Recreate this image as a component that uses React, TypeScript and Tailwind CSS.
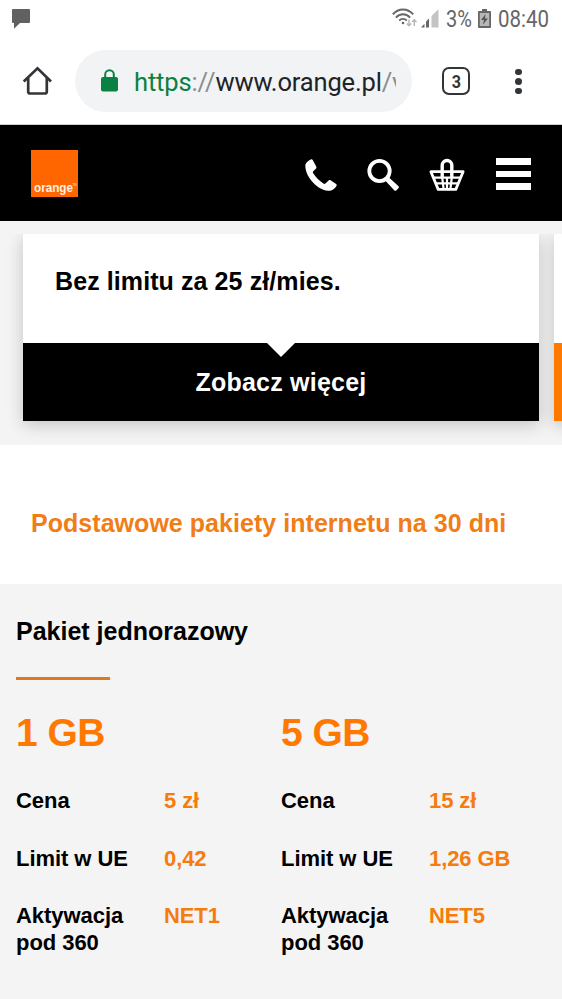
import React from 'react';

interface PackageOffer {
  size: string;
  rows: { label: string; value: string }[];
}

const offers: PackageOffer[] = [
  {
    size: '1 GB',
    rows: [
      { label: 'Cena', value: '5 zł' },
      { label: 'Limit w UE', value: '0,42' },
      { label: 'Aktywacja pod 360', value: 'NET1' },
    ],
  },
  {
    size: '5 GB',
    rows: [
      { label: 'Cena', value: '15 zł' },
      { label: 'Limit w UE', value: '1,26 GB' },
      { label: 'Aktywacja pod 360', value: 'NET5' },
    ],
  },
];

const StatusBar = () => (
  <div className="h-[38px] flex items-start justify-between pl-3 pr-[13px] text-[#666] font-[Roboto,sans-serif]">
    <svg className="mt-[9px]" width="18" height="20" viewBox="0 0 18 20" fill="#616161">
      <path d="M1 0h16a1 1 0 0 1 1 1v12a1 1 0 0 1-1 1H8l-6 5.800V14H1a1 1 0 0 1-1-1V1a1 1 0 0 1 1-1z" />
    </svg>
    <div className="flex items-start">
      <svg className="mt-2" width="25" height="20" viewBox="0 0 25 20" fill="none" stroke="#666" strokeWidth="1.900">
        <path d="M.8 6.300C6.500-.2 15.500-.2 21.200 6.300M3.900 9.600c4-4.500 10.200-4.500 14.200 0M7.200 12.700c2.200-2.400 5.400-2.400 7.600 0" />
        <circle cx="11" cy="15" r="1.300" fill="#666" stroke="none" />
        <path d="M17 11.500v6M14.800 15.500l2.200 2.300 2.200-2.300M22.300 18v-6M20.100 14l2.200-2.300 2.200 2.300" stroke="#b5b5b5" strokeWidth="1.400" />
      </svg>
      <svg className="mt-[9px] ml-[3px]" width="20" height="19" viewBox="0 0 20 19">
        <path d="M1 18.500h3.500v-3.800z" fill="#666" />
        <path d="M6 18.500v-6l3-3v9z" fill="#666" />
        <path d="M11.500 18.500V7L18.500.300v18.200z" fill="#c4c4c4" />
      </svg>
      <span className="ml-[6px] mt-[5px] w-[27px] text-[23px] leading-[30px] inline-block origin-left scale-x-[0.87]">3%</span>
      <svg className="mt-[9px] ml-[5px]" width="13" height="19" viewBox="0 0 13 19">
        <path d="M4 0h5v2h3a1 1 0 0 1 1 1v15a1 1 0 0 1-1 1H1a1 1 0 0 1-1-1V3a1 1 0 0 1 1-1h3z" fill="#666" />
        <path d="M1.800 4h9.400v13H1.800z" fill="#b8b8b8" />
        <path d="M7.500 5L3 11h3l-1.200 4.800L10 9.500H7z" fill="#555" />
      </svg>
      <span className="ml-[7px] mt-[5px] w-[51px] text-[23px] leading-[30px] inline-block origin-left scale-x-[0.89]">08:40</span>
    </div>
  </div>
);

const BrowserBar = () => (
  <div className="h-[87px] flex items-start border-b border-[#d0d0d0] font-[Roboto,sans-serif]">
    <svg className="mt-[28px] ml-[22px]" width="30" height="30" viewBox="0 0 30 30" fill="none" stroke="#333639" strokeWidth="2.700" strokeLinejoin="round">
      <path d="M1.700 15.500L15.500 2.300 29 15.500" strokeLinejoin="miter" />
      <path d="M6.200 12v13.500a2 2 0 0 0 2 2h14.600a2 2 0 0 0 2-2V12" />
    </svg>
    <div className="mt-3 ml-[23px] w-[337px] h-[62px] rounded-full bg-[#f1f3f4] flex items-center">
      <svg className="ml-[26px] -mt-[1px] shrink-0" width="17" height="23" viewBox="0 0 17 23">
        <rect x="0" y="8" width="17" height="14.500" rx="2" fill="#0b8043" />
        <path d="M4.200 9V5.600a4.300 4.300 0 0 1 8.600 0V9" fill="none" stroke="#0b8043" strokeWidth="2" />
      </svg>
      <div className="ml-4 mt-px w-[262px] overflow-hidden whitespace-nowrap text-[25.500px] leading-[34px] tracking-[-0.160px] text-[#212427]">
        <span className="text-[#0b8043]">https</span>
        <span className="text-[#888c90]">://</span>
        www.orange.pl
        <span className="text-[#888c90]">/v</span>
      </div>
    </div>
    <div className="mt-[29px] ml-[30px] w-7 h-7 rounded-[7px] border-[2.500px] border-[#333639] flex items-center justify-center text-[19px] leading-none font-bold text-[#333639]">
      <span className="scale-x-[0.85]">3</span>
    </div>
    <div className="mt-[30.500px] ml-[45px] flex flex-col gap-[3px]">
      <span className="w-[6.500px] h-[6.500px] rounded-full bg-[#333639]" />
      <span className="w-[6.500px] h-[6.500px] rounded-full bg-[#333639]" />
      <span className="w-[6.500px] h-[6.500px] rounded-full bg-[#333639]" />
    </div>
  </div>
);

const SiteHeader = () => (
  <header className="h-24 bg-black flex items-start">
    <div className="mt-[25px] ml-[31px] w-[47px] h-[47px] bg-[#ff6600] text-[#fff0e0] flex items-end pl-[2.500px] pb-[2px]">
      <span className="w-[39px] text-[13px] leading-[14px] font-bold inline-block origin-left scale-x-[0.9]">orange</span>
      <span className="text-[3px] leading-[20px]">TM</span>
    </div>
    <svg className="mt-[33px] ml-[226px]" width="34" height="34" viewBox="0 0 34 34" fill="#fff">
      <path d="M7.300 1.300c-1.900.6-5 3-5.900 5.300C.7 14 5.500 21.700 11.500 27c5 4.200 11 6.700 15.500 5.600 2.300-.8 4.900-3.100 5.700-5.100.2-.6-.1-1-.6-1.400l-5.500-3.800c-.6-.4-1.200-.4-1.700 0l-3.500 3.200c-.6.5-1.300.5-2 0C15.300 22.800 12 19.500 9.200 15.300c-.5-.8-.5-1.400.1-2l2.800-2.900c.5-.6.5-1.200.1-1.800L8.700 1.900c-.4-.6-.8-.8-1.400-.6z" />
    </svg>
    <svg className="mt-[33px] ml-[29px]" width="34" height="34" viewBox="0 0 34 34" fill="#fff">
      <circle cx="12.500" cy="13" r="10.200" fill="none" stroke="#fff" strokeWidth="3.800" />
      <path d="M21.500 17.500l1 2.600 8.800 7.900c.8.800.8 1.500.1 2.300l-1.900 1.900c-.8.800-1.500.8-2.300 0l-8.100-8.600-2-1.500z" />
    </svg>
    <svg className="mt-[33px] ml-[28px]" width="36" height="34" viewBox="0 0 36 34" fill="none" stroke="#fff" strokeWidth="2.800" strokeLinejoin="round">
      <path d="M1.900 13.700h32.200l-7.300 17.700H9.200z" />
      <path d="M13.200 19V7.300a4.800 4.800 0 0 1 9.600 0V19" strokeWidth="3.400" />
      <path d="M5 19.700h26M7 25.300h22M13 18l1.600 13M23 18l-1.600 13M18 19v12" strokeWidth="2.200" />
    </svg>
    <div className="mt-[33px] ml-[31px] flex flex-col gap-[6px]">
      <span className="w-[35px] h-[6.500px] bg-white" />
      <span className="w-[35px] h-[6.500px] bg-white" />
      <span className="w-[35px] h-[6.500px] bg-white" />
    </div>
  </header>
);

const OfferCarousel = () => (
  <section className="h-56 bg-[#f4f4f4] pt-[13px]">
    <div className="h-[211px] flex gap-[15px] pl-[23px] overflow-hidden">
      <div className="w-[516px] h-[187px] shrink-0 flex flex-col bg-white shadow-[0_4px_16px_rgba(0,0,0,0.2)]">
        <div className="h-[109px] pl-[32px] pt-[31px] text-[25px] leading-8 font-bold tracking-[0.090px]">Bez limitu za 25 zł/mies.</div>
        <div className="relative flex-1 bg-black text-white flex items-center justify-center">
          <svg className="absolute top-0 left-1/2 -translate-x-1/2" width="28" height="14" viewBox="0 0 28 14" fill="#fff">
            <path d="M0 0h28L14 14z" />
          </svg>
          <span className="text-[25px] leading-8 font-bold tracking-[0.230px]">Zobacz więcej</span>
        </div>
      </div>
      <div className="w-[516px] h-[187px] shrink-0 flex flex-col bg-white shadow-[0_4px_16px_rgba(0,0,0,0.2)]">
        <div className="h-[109px]" />
        <div className="flex-1 bg-[#ff7900]" />
      </div>
    </div>
  </section>
);

const OfferColumn: React.FC<{ offer: PackageOffer }> = ({ offer }) => (
  <div>
    <h3 className="text-[39px] leading-[48px] font-bold tracking-[-0.500px] text-[#ff7900]">{offer.size}</h3>
    <dl className="mt-[30.500px] flex flex-col gap-[30.700px]">
      {offer.rows.map(row => (
        <div key={row.label} className="flex text-[22px] leading-[27px] font-bold">
          <dt className="w-[148px] pr-7 tracking-[-0.050px]">{row.label}</dt>
          <dd className="text-[#f57c0f] whitespace-nowrap tracking-[-0.100px]">{row.value}</dd>
        </div>
      ))}
    </dl>
  </div>
);

export default function App() {
  return (
    <div className="w-full h-[999px] overflow-hidden bg-white text-black font-['Liberation_Sans',Arial,sans-serif]">
      <StatusBar />
      <BrowserBar />
      <SiteHeader />
      <OfferCarousel />

      <section className="h-[139px] pt-[62px] pl-[31px]">
        <h1 className="text-[25px] leading-8 font-bold tracking-[0.040px] text-[#f07d17] whitespace-nowrap">Podstawowe pakiety internetu na 30 dni</h1>
      </section>

      <section className="h-[415px] bg-[#f4f4f4] pt-[31px] pl-4">
        <h2 className="text-[25px] leading-8 font-bold">Pakiet jednorazowy</h2>
        <div className="mt-[30px] w-[94px] h-[3px] bg-[#e07820]" />
        <div className="mt-[28.500px] grid grid-cols-[265px_1fr]">
          {offers.map(offer => (
            <OfferColumn key={offer.size} offer={offer} />
          ))}
        </div>
      </section>
    </div>
  );
}
